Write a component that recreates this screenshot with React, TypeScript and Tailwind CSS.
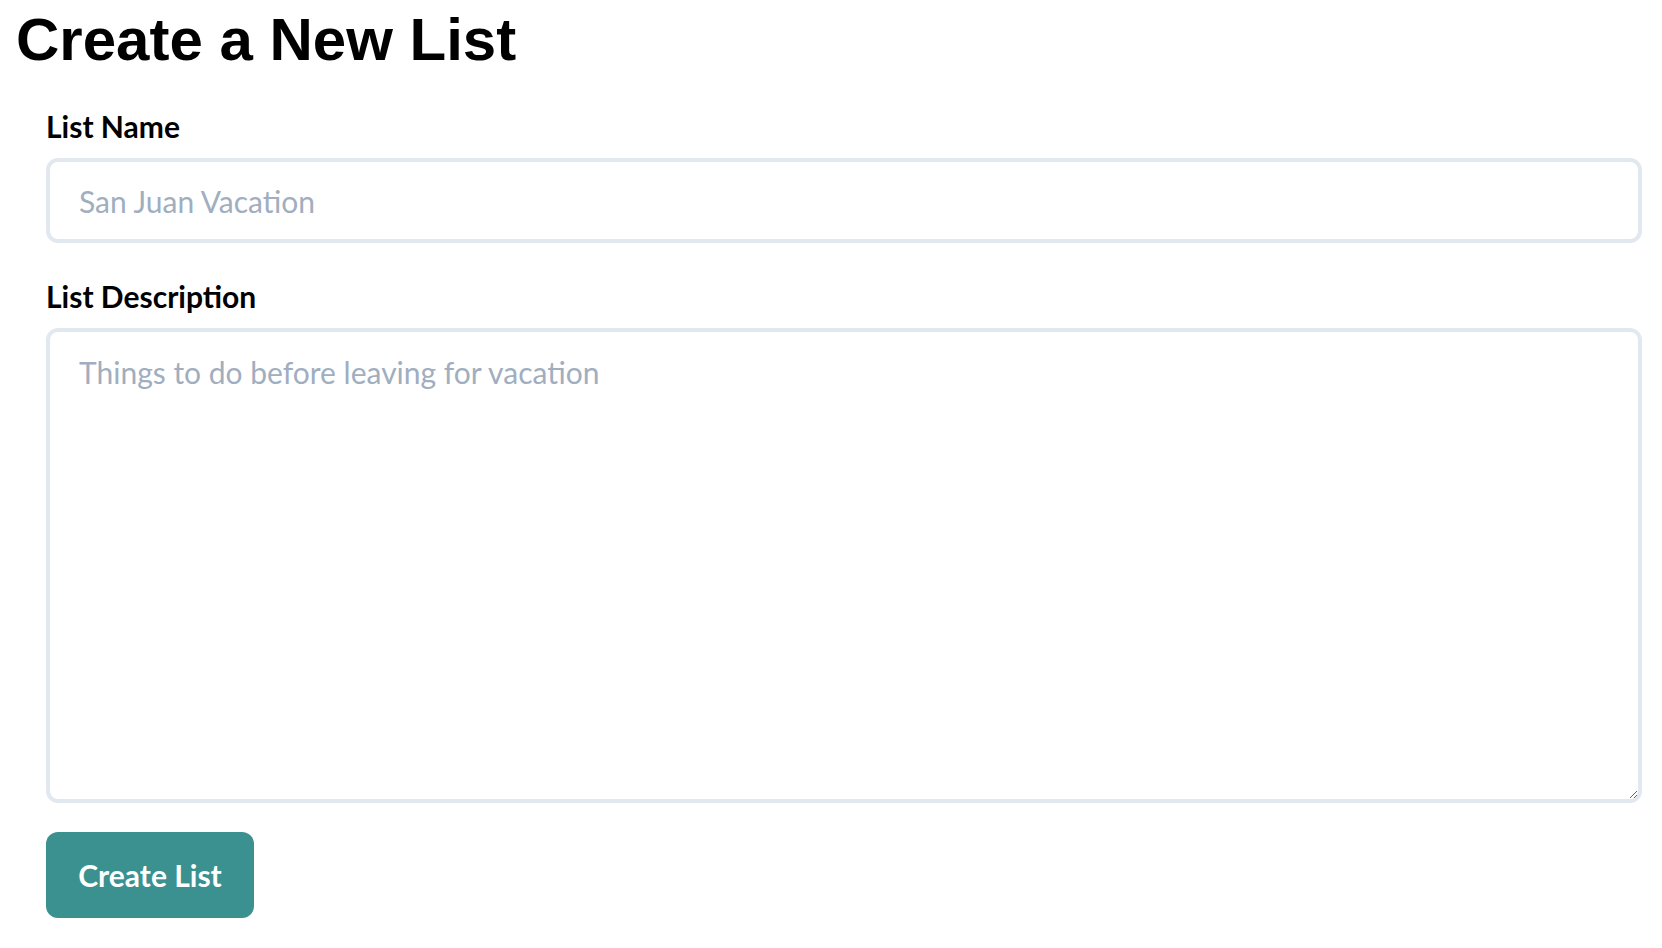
export default function App() {
  return (
    <div className="min-h-screen bg-white">
      <h1 className="pl-[16px] pt-[10px] font-['Liberation_Sans',Arial,sans-serif] text-[60px] font-bold leading-none text-black">
        Create a New List
      </h1>
      <form
        className="ml-[46px] mr-[20px] mt-[38px] flex flex-col font-['Lato',sans-serif]"
        onSubmit={(e) => e.preventDefault()}
      >
        <label className="text-[30px] font-bold leading-[1.2] text-black" htmlFor="list-name">
          List Name
        </label>
        <input
          id="list-name"
          type="text"
          placeholder="San Juan Vacation"
          className="mt-[14px] h-[85px] w-full rounded-[12px] border-4 border-[#e2e8f0] px-[29px] text-[30px] text-gray-700 outline-none placeholder:text-[#a0aec0]"
        />
        <label className="mt-[35px] text-[30px] font-bold leading-[1.2] text-black" htmlFor="list-desc">
          List Description
        </label>
        <textarea
          id="list-desc"
          placeholder="Things to do before leaving for vacation"
          className="mt-[14px] h-[475px] w-full rounded-[12px] border-4 border-[#e2e8f0] px-[29px] py-[22px] text-[30px] leading-[1.2] text-gray-700 outline-none placeholder:text-[#a0aec0]"
        />
        <div className="mt-[29px]">
          <button
            type="submit"
            className="h-[86px] w-[208px] rounded-[12px] bg-[#3a9190] text-[30px] font-bold text-white"
          >
            Create List
          </button>
        </div>
      </form>
    </div>
  );
}
